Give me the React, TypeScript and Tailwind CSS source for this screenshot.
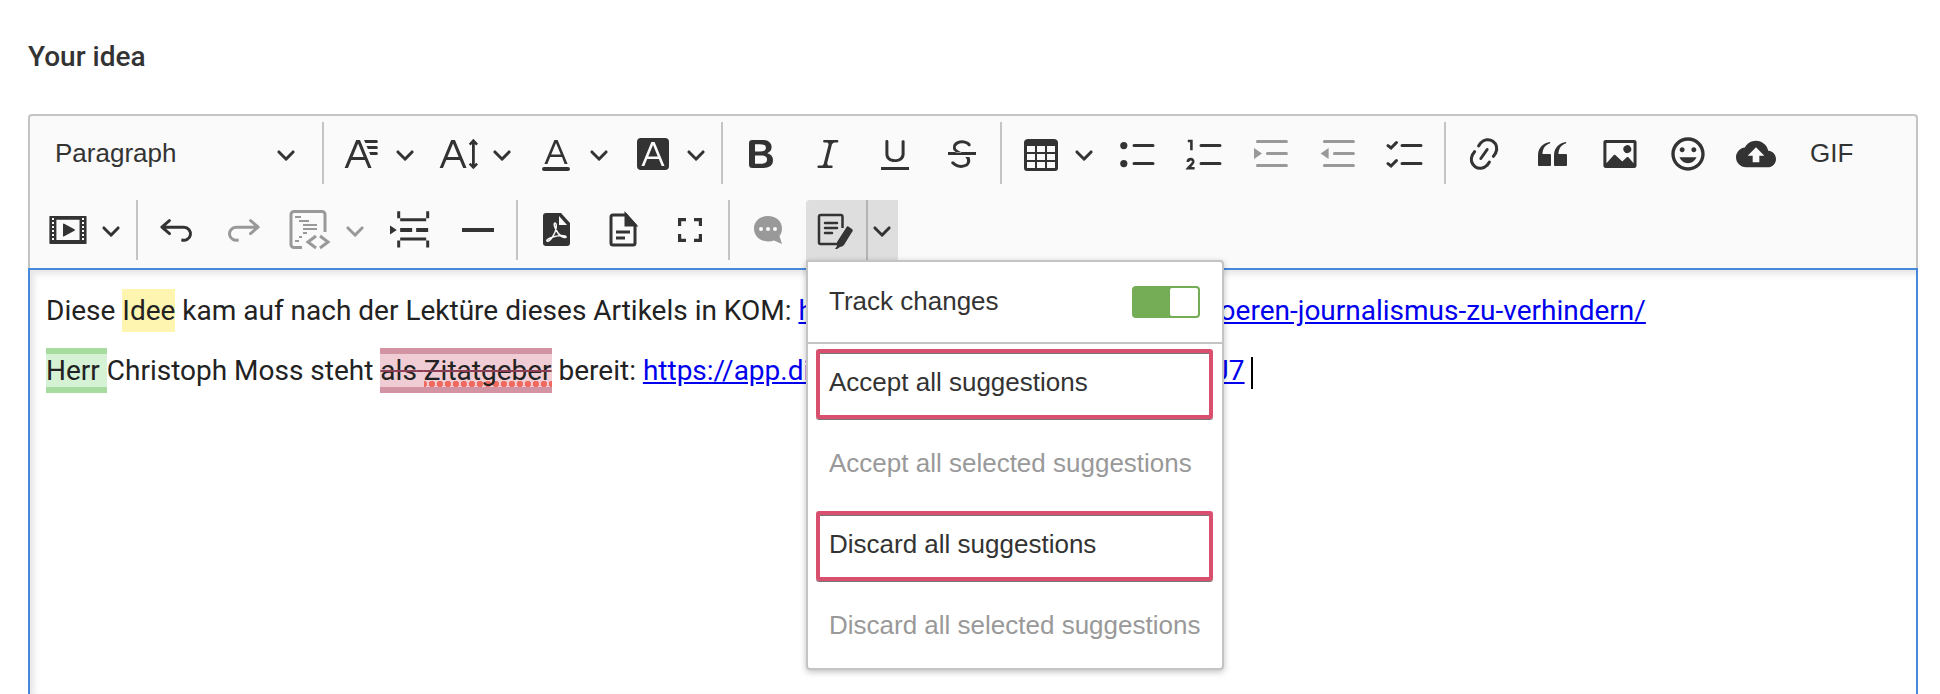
import type { ReactNode } from "react";

const ICONS = {
  arrow:
    "M.941 4.523a.75.75 0 1 1 1.06-1.06l3.006 3.005 3.005-3.005a.75.75 0 1 1 1.06 1.06l-3.549 3.55a.75.75 0 0 1-1.168-.136L.941 4.523z",
  fontFamily:
    "M11.03 3h6.149a.75.75 0 1 1 0 1.5h-5.514L11.03 3zm1.27 3h4.879a.75.75 0 1 1 0 1.5h-4.244L12.3 6zm1.27 3h3.609a.75.75 0 1 1 0 1.5h-2.973L13.57 9zm-2.754 2.5L8.038 4.785 5.261 11.5h5.555zm.62 1.5H4.641l-1.666 4.028H1.312l5.789-14h1.875l5.789 14h-1.663L11.436 13z",
  fontSize:
    "M9.816 11.5 7.038 4.785 4.261 11.5h5.555zm.62 1.5H3.641l-1.666 4.028H.312l5.789-14h1.875l5.789 14h-1.663L10.436 13zM17.2 2.4l2.3 2.5-.9.8-.7-.7v10.1l.7-.7.9.8-2.3 2.4-2.3-2.4.9-.8.7.7V5l-.7.7-.9-.8z",
  fontColor:
    "M12.4 10.3 10 4.5l-2.4 5.8h4.8zm.5 1.2H7.1L5.7 15H4.2l5-12h1.6l5 12h-1.5L13 11.5zm3.1 7H4a1 1 0 0 1 0-2h12a1 1 0 0 1 0 2z",
  fontBackground:
    "M4 2h12a2 2 0 0 1 2 2v12a2 2 0 0 1-2 2H4a2 2 0 0 1-2-2V4a2 2 0 0 1 2-2zm8.38 9.262H7.62L10 5.506l2.38 5.756zm.532 1.285L14.34 16h1.426L10.804 4H9.196L4.234 16H5.66l1.428-3.453h5.824z",
  bold: "M10.187 17H5.773c-.637 0-1.092-.138-1.364-.415-.273-.277-.409-.718-.409-1.323V4.738c0-.617.14-1.062.419-1.332.279-.27.73-.406 1.354-.406h4.68c.69 0 1.288.041 1.793.124.506.083.96.242 1.36.478.341.197.644.447.906.75a3.262 3.262 0 0 1 .808 2.162c0 1.401-.722 2.426-2.167 3.075C15.05 10.175 16 11.315 16 13.01a3.756 3.756 0 0 1-2.296 3.504 6.1 6.1 0 0 1-1.517.377c-.571.073-1.238.11-2 .11zm-.217-6.217H7v4.087h3.069c1.977 0 2.965-.69 2.965-2.072 0-.707-.256-1.22-.768-1.537-.512-.319-1.277-.478-2.296-.478zM7 5.13v3.619h2.606c.729 0 1.292-.067 1.69-.2a1.6 1.6 0 0 0 .91-.765c.165-.267.247-.566.247-.897 0-.707-.26-1.176-.778-1.409-.519-.232-1.31-.348-2.375-.348H7z",
  italic:
    "m9.586 14.633.021.004c-.036.335.095.655.393.962.082.083.173.15.274.201h1.474a.6.6 0 1 1 0 1.2H5.304a.6.6 0 0 1 0-1.2h1.15c.474-.07.809-.182 1.005-.334.157-.122.291-.32.404-.597l2.416-9.55a1.053 1.053 0 0 0-.281-.823 1.12 1.12 0 0 0-.442-.296H8.15a.6.6 0 0 1 0-1.2h6.443a.6.6 0 1 1 0 1.2h-1.195c-.376.056-.65.155-.823.296-.215.175-.423.439-.623.79l-2.366 9.347z",
  underline:
    "M3 18v-1.5h14V18zm2.2-8V3.6c0-.4.4-.6.8-.6.3 0 .7.2.7.6v6.2c0 2 1.3 2.8 3.2 2.8 1.9 0 3.4-.9 3.4-2.9V3.6c0-.3.4-.5.8-.5.3 0 .7.2.7.5V10c0 2.7-2.2 4-4.9 4-2.6 0-4.7-1.2-4.7-4z",
  strike:
    "M7 16.4c-.8-.4-1.5-.9-2.2-1.5a.6.6 0 0 1-.2-.5l.3-.6h1c1 1.2 2.1 1.7 3.7 1.7 1 0 1.8-.3 2.3-.6.6-.4.6-1.2.6-1.3.2-1.2-.9-2.1-.9-2.1h2.1c.3.7.4 1.2.4 1.7v.8l-.6 1.2c-.6.8-1.1 1-1.6 1.2a6 6 0 0 1-2.4.6c-1 0-1.8-.3-2.5-.6zM6.8 9 6 8.3c-.4-.5-.5-.8-.5-1.6 0-.7.1-1.3.5-1.8.4-.6 1-1 1.6-1.3a6.3 6.3 0 0 1 4.7 0 4 4 0 0 1 1.7 1l.3.7c0 .1.2.4-.2.7-.4.2-.9.1-1 0a3 3 0 0 0-1.2-1c-.4-.2-1-.3-2-.4-.7 0-1.4.2-2 .6-.8.6-1 .8-1 1.5 0 .8.5 1 1.2 1.5.6.4 1.1.7 1.9 1H6.8zM3 10.5V9h14v1.5z",
  table:
    "M3 6v3h4V6H3zm0 4v3h4v-3H3zm0 4v3h4v-3H3zm5 3h4v-3H8v3zm5 0h4v-3h-4v3zm4-4v-3h-4v3h4zm0-4V6h-4v3h4zm1.5 8a1.5 1.5 0 0 1-1.5 1.5H3A1.5 1.5 0 0 1 1.5 17V4c.222-.863 1.068-1.5 2-1.5h13c.932 0 1.778.637 2 1.5v13zM12 13v-3H8v3h4zm0-4V6H8v3h4z",
  link: "m11.077 15 .991-1.416a.75.75 0 1 1 1.229.86l-1.148 1.64a.748.748 0 0 1-.217.206 5.251 5.251 0 0 1-8.503-5.955.741.741 0 0 1 .12-.274l1.147-1.639a.75.75 0 1 1 1.228.86L4.933 10.7l.006.003a3.75 3.75 0 0 0 6.132 4.294l.006.004zm5.494-5.335a.748.748 0 0 1-.12.274l-1.147 1.639a.75.75 0 1 1-1.228-.86l.86-1.23a3.75 3.75 0 0 0-6.144-4.301l-.86 1.229a.75.75 0 0 1-1.229-.86l1.148-1.64a.748.748 0 0 1 .217-.206 5.251 5.251 0 0 1 8.503 5.955zm-4.563-2.532a.75.75 0 0 1 .184 1.045l-3.155 4.505a.75.75 0 1 1-1.229-.86l3.155-4.506a.75.75 0 0 1 1.045-.184z",
  quote:
    "M3 10.423a6.5 6.5 0 0 1 6.056-6.408l.038.67C6.448 5.423 5.354 7.663 5.22 10H9c.552 0 .5.432.5.986v4.511c0 .554-.448.503-1 .503h-5c-.552 0-.5-.449-.5-1.003v-4.574zm8 0a6.5 6.5 0 0 1 6.056-6.408l.038.67c-2.646.739-3.74 2.979-3.873 5.315H17c.552 0 .5.432.5.986v4.511c0 .554-.448.503-1 .503h-5c-.552 0-.5-.449-.5-1.003v-4.574z",
  image:
    "M6.91 10.54c.26-.23.64-.21.88.03l3.36 3.14 2.23-2.06a.64.64 0 0 1 .87 0l2.52 2.97V4.5H3.2v10.12l3.71-4.08zm10.27-7.51c.6 0 1.09.47 1.09 1.05v11.84c0 .59-.49 1.06-1.09 1.06H2.79c-.6 0-1.09-.47-1.09-1.06V4.08c0-.58.49-1.05 1.1-1.05h14.38zm-5.22 5.56a1.96 1.96 0 1 1 3.4-1.96 1.96 1.96 0 0 1-3.4 1.96z",
  emoji:
    "M11.99 2C6.47 2 2 6.48 2 12s4.47 10 9.99 10C17.52 22 22 17.52 22 12S17.52 2 11.99 2zM12 20c-4.42 0-8-3.58-8-8s3.58-8 8-8 8 3.58 8 8-3.58 8-8 8zm3.5-9c.83 0 1.5-.67 1.5-1.5S16.33 8 15.5 8 14 8.67 14 9.5s.67 1.5 1.5 1.5zm-7 0c.83 0 1.5-.67 1.5-1.5S9.33 8 8.5 8 7 8.67 7 9.5 7.67 11 8.5 11zm3.5 6.5c2.33 0 4.31-1.46 5.11-3.5H6.89c.8 2.04 2.78 3.5 5.11 3.5z",
  upload:
    "M19.35 10.04C18.67 6.59 15.64 4 12 4 9.11 4 6.6 5.64 5.35 8.04 2.34 8.36 0 10.91 0 14c0 3.31 2.69 6 6 6h13c2.76 0 5-2.24 5-5 0-2.64-2.05-4.78-4.65-4.96zM14 13v4h-4v-4H7l5-5 5 5h-3z",
  media:
    "M18.68 3.03c.6 0 .59-.03.59.55v12.84c0 .59.01.56-.59.56H1.29c-.6 0-.59.03-.59-.56V3.58c0-.58-.01-.55.6-.55h17.38zM15.77 15.05V4.9H4.2v10.16h11.57zM2 4v1h1V4H2zm0 2v1h1V6H2zm0 2v1h1V8H2zm0 2v1h1v-1H2zm0 2v1h1v-1H2zm0 2v1h1v-1H2zM17 4v1h1V4h-1zm0 2v1h1V6h-1zm0 2v1h1V8h-1zm0 2v1h1v-1h-1zm0 2v1h1v-1h-1zm0 2v1h1v-1h-1zM7.5 7.177a.4.4 0 0 1 .593-.351l5.133 2.824a.4.4 0 0 1 0 .7l-5.133 2.824a.4.4 0 0 1-.593-.35V7.176v.001z",
  undo: "m5.042 9.367 2.189 1.837a.75.75 0 0 1-.965 1.149l-3.788-3.18a.747.747 0 0 1-.21-.284.75.75 0 0 1 .17-.945L6.23 4.762a.75.75 0 1 1 .964 1.15L4.863 7.866h8.917A.75.75 0 0 1 14 7.9a4 4 0 1 1-1.477 7.718l.344-1.489a2.5 2.5 0 1 0 1.094-4.73l.008-.032H5.042z",
  redo: "m14.958 9.367-2.189 1.837a.75.75 0 0 0 .965 1.149l3.788-3.18a.747.747 0 0 0 .21-.284.75.75 0 0 0-.17-.945L13.77 4.762a.75.75 0 1 0-.964 1.15l2.331 1.955H6.22A.75.75 0 0 0 6 7.9a4 4 0 1 0 1.477 7.718l-.344-1.489A2.5 2.5 0 1 1 6.039 9.4l-.008-.032h8.927z",
  pageBreak:
    "M3.598.687h1.5v5h-1.5zm14.5 0h1.5v5h-1.5zM19.598 4.187v1.5h-16v-1.5zm-16 14.569h1.5v-5h-1.5zm14.5 0h1.5v-5h-1.5zM19.598 15.256v-1.5h-16v1.5zM5.081 9h6v2h-6zm8 0h6v2h-6zM3.4 10 0 12.2V7.8z",
  rule: "M2 9h16v2H2z",
  fullscreen:
    "M4 4h4v1.6H5.6V8H4zM12 4h4v4h-1.6V5.6H12zM4 12h1.6v2.4H8V16H4zM14.4 12H16v4h-4v-1.6h2.4z",
};

const Icon = ({ d, box = "0 0 20 20" }: { d: string; box?: string }) => (
  <svg viewBox={box} className="size-10 shrink-0" fill="currentColor" fillRule="evenodd" aria-hidden="true">
    <path d={d} />
  </svg>
);

const Svg = ({ children }: { children: ReactNode }) => (
  <svg viewBox="0 0 20 20" className="size-10 shrink-0" fill="none" stroke="currentColor" strokeWidth="1.5" aria-hidden="true">
    {children}
  </svg>
);

const Chevron = () => (
  <svg viewBox="0 0 10 10" className="size-5 shrink-0" fill="currentColor" aria-hidden="true">
    <path d={ICONS.arrow} />
  </svg>
);

type ToolProps = { label: string; disabled?: boolean; children: ReactNode };

const Tool = ({ label, disabled, children }: ToolProps) => (
  <button
    type="button"
    aria-label={label}
    disabled={disabled}
    className="flex h-[60px] min-w-[60px] shrink-0 items-center justify-center disabled:text-[#999]"
  >
    {children}
  </button>
);

const DropTool = ({ label, disabled, children }: ToolProps) => (
  <button
    type="button"
    aria-label={label}
    aria-haspopup="true"
    disabled={disabled}
    className="flex h-[60px] w-[90px] shrink-0 items-center justify-between pr-[7px] pl-2.5 disabled:text-[#999]"
  >
    {children}
    <Chevron />
  </button>
);

const Separator = () => <div className="mx-2 w-0.5 shrink-0 self-stretch bg-[#c4c4c4]" />;

const MenuItem = ({ children, disabled, marked }: { children: ReactNode; disabled?: boolean; marked?: boolean }) => (
  <button
    type="button"
    role="menuitem"
    disabled={disabled}
    className={`mr-[9px] ml-2 flex h-[70px] items-center rounded-[3px] border-4 pb-1 pl-[9px] whitespace-nowrap disabled:text-[#999] ${
      marked ? "border-[#d9506f] shadow-[0_1px_0_#777,inset_0_1px_0_#777]" : "border-transparent"
    }`}
  >
    {children}
  </button>
);

const TrackChangesMenu = () => (
  <div
    role="menu"
    className="absolute top-[60px] left-0 z-10 w-[418px] rounded-[4px] rounded-tl-none border-2 border-[#c4c4c4] bg-white shadow-[0_2px_6px_rgba(0,0,0,0.25)]"
  >
    <label className="box-content flex h-[80px] items-center justify-between border-b-2 border-[#c4c4c4] pr-[22px] pl-[21px]">
      <span className="pb-0.5">Track changes</span>
      <input type="checkbox" role="switch" defaultChecked className="sr-only" />
      <span className="flex h-8 w-[68px] justify-end rounded-[4px] bg-[#74ad55] p-0.5">
        <span className="w-7 rounded-[2px] bg-white" />
      </span>
    </label>
    <div className="flex flex-col gap-[11px] pt-[5px] pb-1.5">
      <MenuItem marked>Accept all suggestions</MenuItem>
      <MenuItem disabled>Accept all selected suggestions</MenuItem>
      <MenuItem marked>Discard all suggestions</MenuItem>
      <MenuItem disabled>Discard all selected suggestions</MenuItem>
    </div>
  </div>
);

const Toolbar = () => (
  <div
    role="toolbar"
    aria-label="Editor toolbar"
    className="flex flex-col gap-4 rounded-t-[4px] border-2 border-b-0 border-[#c4c4c4] bg-[#fafafa] px-2 pt-1.5 pb-2 font-['Liberation_Sans',Arial,sans-serif] text-[26px] text-[#333]"
  >
    <div className="flex h-[62px] items-end">
      <button type="button" aria-haspopup="true" className="flex h-[60px] w-[276px] shrink-0 items-center justify-between pr-[18px] pl-[17px]">
        <span className="pb-0.5">Paragraph</span>
        <Chevron />
      </button>
      <Separator />
      <div className="flex gap-[7px]">
        <DropTool label="Font family"><Icon d={ICONS.fontFamily} /></DropTool>
        <DropTool label="Font size"><Icon d={ICONS.fontSize} /></DropTool>
        <DropTool label="Font color"><Icon d={ICONS.fontColor} /></DropTool>
        <DropTool label="Font background color"><Icon d={ICONS.fontBackground} /></DropTool>
      </div>
      <Separator />
      <div className="flex gap-[7px]">
        <Tool label="Bold"><Icon d={ICONS.bold} /></Tool>
        <Tool label="Italic"><Icon d={ICONS.italic} /></Tool>
        <Tool label="Underline"><Icon d={ICONS.underline} /></Tool>
        <Tool label="Strikethrough"><Icon d={ICONS.strike} /></Tool>
      </div>
      <Separator />
      <div className="flex gap-[7px] pl-px">
        <DropTool label="Insert table"><Icon d={ICONS.table} /></DropTool>
        <Tool label="Bulleted list">
          <Svg>
            <circle cx="2.9" cy="5.8" r="1.8" fill="currentColor" stroke="none" />
            <circle cx="2.9" cy="14.8" r="1.8" fill="currentColor" stroke="none" />
            <path d="M8 5.8h9.5M8 14.8h9.5" strokeLinecap="round" />
          </Svg>
        </Tool>
        <Tool label="Numbered list">
          <Svg>
            <path d="M8 5.8h9.5M8 14.8h9.5" strokeLinecap="round" />
            <path d="M1.4 3.5h1.8v4.6M1.4 14c.1-1.9 3-1.9 2.7 0-.2 1-1.5 1.9-2.5 3.1h3.2" strokeWidth="1.3" />
          </Svg>
        </Tool>
        <Tool label="Increase indent" disabled>
          <Svg>
            <path d="M2.7 3.8h14.5M7.7 9.8h9.5M2.7 15.8h14.5" strokeLinecap="round" />
            <path d="M1 7l4 2.8-4 2.7z" fill="currentColor" stroke="none" />
          </Svg>
        </Tool>
        <Tool label="Decrease indent" disabled>
          <Svg>
            <path d="M2.7 3.8h14.5M7.7 9.8h9.5M2.7 15.8h14.5" strokeLinecap="round" />
            <path d="M4.8 7l-4 2.8 4 2.7z" fill="currentColor" stroke="none" />
          </Svg>
        </Tool>
        <Tool label="To-do list">
          <Svg>
            <path d="M8 5.8h9.5M8 14.8h9.5M1 5.8l1.5 1.2 2.7-2.7M1 14.8l1.5 1.2 2.7-2.7" strokeLinecap="round" />
          </Svg>
        </Tool>
      </div>
      <Separator />
      <div className="flex gap-2">
        <Tool label="Link"><Icon d={ICONS.link} /></Tool>
        <Tool label="Block quote"><Icon d={ICONS.quote} /></Tool>
        <Tool label="Insert image"><Icon d={ICONS.image} /></Tool>
        <Tool label="Emoji"><Icon d={ICONS.emoji} box="0 0 24 24" /></Tool>
        <Tool label="Upload file"><Icon d={ICONS.upload} box="0 0 24 24" /></Tool>
        <Tool label="GIF"><span className="px-4 pb-0.5">GIF</span></Tool>
      </div>
    </div>

    <div className="flex h-[60px] items-end">
      <DropTool label="Insert media"><Icon d={ICONS.media} /></DropTool>
      <Separator />
      <div className="flex gap-2">
        <Tool label="Undo"><Icon d={ICONS.undo} /></Tool>
        <Tool label="Redo" disabled><Icon d={ICONS.redo} /></Tool>
        <DropTool label="Insert code block" disabled>
          <svg viewBox="3 0 40 40" className="size-10 shrink-0 overflow-visible" fill="none" stroke="currentColor" aria-hidden="true">
            <path d="M13 37.5H5a3 3 0 0 1-3-3V4.500a3 3 0 0 1 3-3h28a3 3 0 0 1 3 3V22" strokeWidth="3" />
            <path d="M6 7h6M10 11h10M14 15h14M14 19h14M14 23h4M10 27h3M6 31h4" strokeWidth="2" />
            <path d="M27 26l-8 6 8 6M31 26l8 6-8 6" strokeWidth="3" />
          </svg>
        </DropTool>
        <Tool label="Page break"><Icon d={ICONS.pageBreak} /></Tool>
        <Tool label="Horizontal line"><Icon d={ICONS.rule} /></Tool>
      </div>
      <Separator />
      <div className="flex gap-[7px]">
        <Tool label="Export to PDF">
          <svg viewBox="0 0 40 40" className="size-10 shrink-0" aria-hidden="true">
            <path d="M10 3h15l9 10v20a3 3 0 0 1-3 3H10a3 3 0 0 1-3-3V6a3 3 0 0 1 3-3z" fill="currentColor" />
            <path d="M23 6v9h8z" fill="#fafafa" />
            <path d="M11 31c-2-2 12-7 18-5 4 2-3 3-7-3-3-4-5-10-3-10s2 7-2 13c-2 4-5 6-6 5z" fill="none" stroke="#fafafa" strokeWidth="1.5" />
          </svg>
        </Tool>
        <Tool label="Export to Word">
          <svg viewBox="0 0 40 40" className="size-10 shrink-0" fill="none" stroke="currentColor" strokeWidth="3" aria-hidden="true">
            <path d="M10 5h13l9 10v18a2 2 0 0 1-2 2H10a2 2 0 0 1-2-2V7a2 2 0 0 1 2-2z" />
            <path d="M23 5v10h9z" fill="currentColor" />
            <path d="M13 22h14M13 28h9" />
          </svg>
        </Tool>
        <Tool label="Fullscreen"><Icon d={ICONS.fullscreen} /></Tool>
      </div>
      <Separator />
      <div className="flex gap-2">
        <Tool label="Comment" disabled>
          <svg viewBox="0 0 40 40" className="size-10 shrink-0" aria-hidden="true">
            <path d="M20 6c8 0 14 5 14 12.5 0 3-1 5.500-2.500 7.500l2.500 8-8-3.500c-2 .5-4 1-6 1-8 0-14-5.500-14-13S12 6 20 6z" fill="currentColor" />
            <path d="M13 19h.01M20 19h.01M27 19h.01" stroke="#fafafa" strokeWidth="4" strokeLinecap="round" />
          </svg>
        </Tool>
        <div className="relative flex">
          <button type="button" aria-label="Track changes" className="flex h-[60px] w-[62px] items-center justify-center rounded-tl-[4px] border-r-2 border-[#b3b3b3] bg-[#dedede]">
            <svg viewBox="0 0 40 40" className="size-10 overflow-visible" aria-hidden="true">
              <path d="M22 34H4.500a1.500 1.500 0 0 1-1.500-1.500V6.500A1.500 1.500 0 0 1 4.500 5H25a1.500 1.500 0 0 1 1.500 1.500V18" fill="none" stroke="currentColor" strokeWidth="2.5" />
              <path d="M9 13h12M9 18h12M9 23h7" stroke="currentColor" strokeWidth="2.5" strokeLinecap="round" />
              <path d="M30 18c1-2 2-2 3-1l3 2c1 1 1 2 0 3l-8 13c-1 1-3 2-4 2l-3 2h-2l2-3v-4z" fill="currentColor" />
            </svg>
          </button>
          <button type="button" aria-label="Track changes options" aria-expanded="true" className="flex h-[60px] w-[30px] items-center justify-center bg-[#dedede] pr-0.5">
            <Chevron />
          </button>
          <TrackChangesMenu />
        </div>
      </div>
    </div>
  </div>
);

const Editable = () => (
  <div className="flex flex-1 flex-col gap-4 border-2 border-b-0 border-[#4688dc] bg-white px-4 pt-[19px] font-[Roboto,sans-serif] text-[28px] leading-[44px] whitespace-nowrap text-[#222] shadow-[inset_4px_4px_6px_rgba(0,0,0,0.1)]">
    <p>
      Diese <mark className="bg-[#fdf5b0] py-[5px] text-inherit">Idee</mark> kam auf nach der Lektüre dieses Artikels in KOM:{" "}
      <a href="#kom" className="text-[#0000ee] underline">
        https://www.kom.de/media/die-stoeren-journalismus-zu-verhindern/
      </a>
    </p>
    <p>
      <ins className="border-y-6 border-[#a8dba0] bg-[#d5f3d4] no-underline">Herr </ins>
      Christoph Moss steht{" "}
      <del className="border-y-6 border-[#d294a2] bg-[#f0ccd4] decoration-[#8c4056] decoration-2">
        als{" "}
        <span className="bg-[radial-gradient(circle,#ee6a5f_3px,transparent_3px)] bg-[length:8px_6px] bg-bottom bg-repeat-x">
          Zitatgeber
        </span>
      </del>{" "}
      bereit:{" "}
      <a href="#app" className="text-[#0000ee] underline">
        https://app.digital-newsroom.de/medien/bild/J7
      </a>
      <span className="ml-1.5 inline-block h-8 w-0.5 bg-black align-middle" />
    </p>
  </div>
);

export default function App() {
  return (
    <main className="flex min-h-screen flex-col overflow-hidden bg-white pt-[33px] pr-[22px] pl-7">
      <h2 className="mb-[33px] font-[Roboto,sans-serif] text-[28px] leading-[48px] font-medium text-[#333]">Your idea</h2>
      <Toolbar />
      <Editable />
    </main>
  );
}
